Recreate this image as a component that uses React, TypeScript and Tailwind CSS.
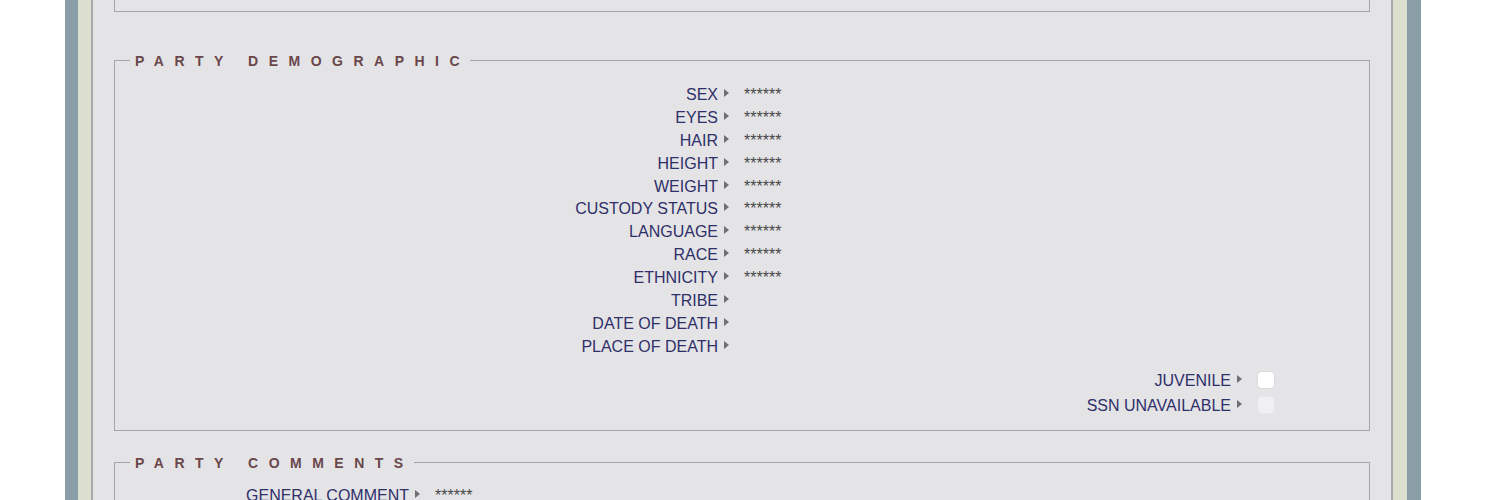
import React from "react";

const font = { fontFamily: '"Liberation Sans", Arial, sans-serif' };

const demographics: [string, string][] = [
  ["SEX", "******"],
  ["EYES", "******"],
  ["HAIR", "******"],
  ["HEIGHT", "******"],
  ["WEIGHT", "******"],
  ["CUSTODY STATUS", "******"],
  ["LANGUAGE", "******"],
  ["RACE", "******"],
  ["ETHNICITY", "******"],
  ["TRIBE", ""],
  ["DATE OF DEATH", ""],
  ["PLACE OF DEATH", ""],
];

function Arrow() {
  return (
    <svg width="5" height="8" viewBox="0 0 5 8" className="ml-[6px] shrink-0 -mt-[3px]">
      <path d="M0 0 L5 4 L0 8 Z" fill="#6f6f72" />
    </svg>
  );
}

function Label({ text, width }: { text: string; width: string }) {
  return (
    <div className={`${width} flex items-center justify-end text-[16px] leading-[23px] text-[#2f2f69]`}>
      <span>{text}</span>
      <Arrow />
    </div>
  );
}

function Value({ text }: { text: string }) {
  return <div className="ml-[15px] text-[16px] leading-[23px] text-[#48484a]">{text}</div>;
}

function Legend({ children }: { children: React.ReactNode }) {
  return (
    <legend className="ml-[15px] pl-[5px] pt-[2px] text-[14px] leading-[15px] font-bold tracking-[10.5px] text-[#6a474b]">
      {children}
    </legend>
  );
}

function Check({ dim }: { dim?: boolean }) {
  return (
    <div
      className={`ml-[15px] h-[18px] w-[18px] rounded-[5px] border ${
        dim ? "bg-[#f0f0f2] border-[#e6e6e8]" : "bg-white border-[#dcdcde]"
      }`}
    />
  );
}

export default function App() {
  return (
    <div className="flex min-h-screen bg-white" style={font}>
      <div className="w-[65px] bg-white" />
      <div className="w-[13px] bg-[#8a9ea7]" />
      <div className="w-[13px] bg-[#dcdfcd]" />
      <div className="w-[2px] bg-[#a9a9a9]" />

      <div className="flex-1 bg-[#e4e4e6] px-[21px]">
        {/* previous section, cut off */}
        <div className="h-[12px] border-x border-b border-[#a5a5a7]" />

        {/* Party Demographic */}
        <fieldset className="mt-[40px] border border-[#a5a5a7] pt-[14px] pb-[12px]">
          <Legend>PARTY DEMOGRAPHIC</Legend>
          {demographics.map(([label, value]) => (
            <div key={label} className="flex h-[22.9px]">
              <Label text={label} width="w-[614px]" />
              <Value text={value} />
            </div>
          ))}
          <div className="mt-[10px] flex h-[25px] items-center justify-end pr-[94px]">
            <Label text="JUVENILE" width="" />
            <Check />
          </div>
          <div className="flex h-[25px] items-center justify-end pr-[94px]">
            <Label text="SSN UNAVAILABLE" width="" />
            <Check dim />
          </div>
        </fieldset>

        {/* Party Comments */}
        <fieldset className="mt-[23px] border border-[#a5a5a7] pt-[13px] pb-[12px]">
          <Legend>PARTY COMMENTS</Legend>
          <div className="flex h-[23px]">
            <Label text="GENERAL COMMENT" width="w-[305px]" />
            <Value text="******" />
          </div>
        </fieldset>
      </div>

      <div className="w-[2px] bg-[#a9a9a9]" />
      <div className="w-[14px] bg-[#dcdfcd]" />
      <div className="w-[14px] bg-[#8a9ea7]" />
      <div className="w-[79px] bg-white" />
    </div>
  );
}
